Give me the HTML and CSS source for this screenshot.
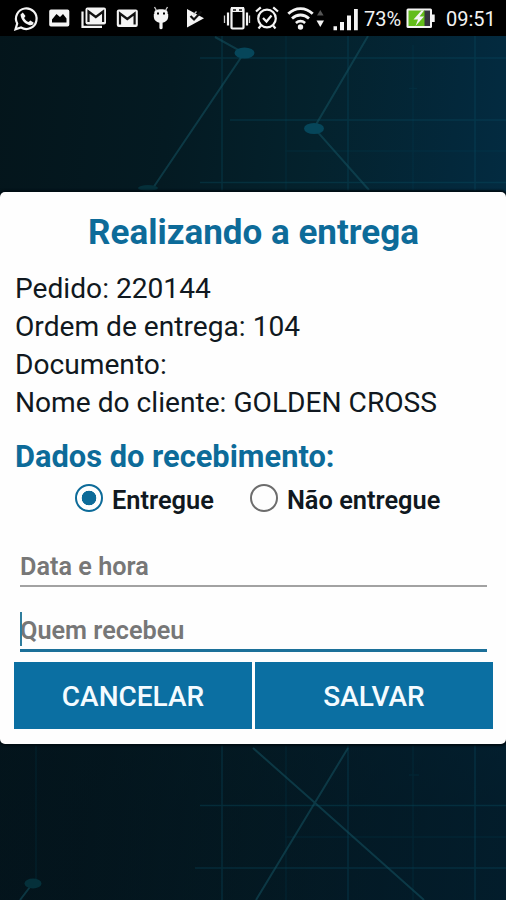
FILE: index.html
```html
<!DOCTYPE html>
<html lang="pt-BR">
<head>
<meta charset="utf-8">
<title>Realizando a entrega</title>
<link rel="stylesheet" href="styles.css">
</head>
<body>
<div class="screen">
  <svg class="backdrop" viewBox="0 0 506 900" aria-hidden="true">
    <g class="grid-lines">
      <path d="M222 36V900M348 36V900M475 36V900M200 58H506M230 120H506M200 182.500H506M200 805.500H506M195 868H506"/>
      <path class="faint" d="M286 36V900M413 45V900M36 745V880M285 151H506M285 837H506M409 88.500h8M409 775h10"/>
    </g>
    <g class="links">
      <path d="M215 37L244 53L153 188M368 36L314 128L369 190M348 748L256 900M253 748L314 802L424 900M33 883L20 900"/>
    </g>
    <g class="nodes">
      <ellipse cx="244.500" cy="53" rx="10" ry="5.500"/>
      <ellipse cx="314" cy="128.500" rx="10" ry="5.500"/>
      <ellipse class="dim" cx="33" cy="883.500" rx="8.500" ry="5"/>
      <ellipse class="dim" cx="148" cy="188" rx="10" ry="3"/>
    </g>
  </svg>

  <header class="status">
    <svg viewBox="12 0 35 36"><path class="line2" d="M15.500 29.300L17.200 23.500A10.300 10.300 0 1 1 21 27.500Z"/><path class="fill" d="M20.500 14.500l2.300-2 2.700 3.500-1.400 1.900c1 2 2.500 3.300 4.500 4.200l1.800-1.700 3.400 2.300c-.8 2.300-2.500 2.900-4.900 2.200-4.300-1.300-7.800-5-8.400-10.400z"/></svg>
    <svg viewBox="47 0 32 36"><path class="fill" fill-rule="evenodd" d="M51 9.500h16.500a1.800 1.800 0 0 1 1.800 1.800v13.400a1.800 1.800 0 0 1-1.800 1.800H51a1.800 1.800 0 0 1-1.800-1.800V11.300A1.800 1.800 0 0 1 51 9.500zM52 22.500h14.500v-4l-3.500-4.500-3 3-3.500-3-4.500 5.500z"/></svg>
    <svg viewBox="79 0 35 36"><path class="line2" d="M82.500 11.500V26.800H102"/><rect class="fill" x="85.500" y="7.500" width="20.500" height="17" rx="2"/><path class="cut" d="M88.500 22V11.500l7.300 5.500 7.300-5.500V22"/></svg>
    <svg viewBox="114 0 36 36"><rect class="fill" x="116.800" y="9.500" width="21" height="17.500" rx="2"/><path class="cut" d="M120 24.500V13.500l7.300 5.500 7.300-5.500v11"/></svg>
    <svg viewBox="150 0 34 36"><path class="fill" fill-rule="evenodd" d="M155 10.500c3.500-1.600 8.500-1.600 12 0 .7 1.200.9 2.400.7 3.500h.5v3c-.2 3.200-2.500 5-5.600 5.700v5.600c-.5 1.200-2.700 1.200-3.200 0v-5.600c-3.100-.7-5.400-2.500-5.600-5.700v-3h.5c-.2-1.100 0-2.300.7-3.500zM157 12.500v2h2v-2zM163 12.500v2h2v-2z"/><path class="line1" d="M154.500 7l2 3.500M167.500 7l-2 3.500"/></svg>
    <svg viewBox="184 0 37 36"><path class="fill" d="M187 9l17 9.200L187 27.500z"/><path class="cut" d="M190.500 16l3.500 3.500 7.500-8"/><path class="line1" d="M196.500 11.500l-3 3.200"/></svg>
    <svg viewBox="221 0 32 36"><rect class="line2" x="231.500" y="8" width="12" height="20.500" rx="1"/><path class="fill" d="M231 7h13v5h-13z"/><path class="cut thin" d="M233 10h3M239 10h3"/><path class="line2" d="M228 12.500v13M247 12.500v13"/><path class="line1" d="M224.500 15.500v7.500M249.500 15.500v7.500"/></svg>
    <svg viewBox="253 0 33 36"><circle class="line2" cx="267" cy="18.500" r="8.800"/><path class="line2" d="M256 11.500l4.800-4.200M273.200 7.300l4.800 4.200M261 25.500l-2.500 3M273 25.500l2.500 3M263 18l3.500 3.500 5-6"/></svg>
    <svg viewBox="286 0 29 36"><path class="wifi" d="M288.300 13.800c7-7 17.400-7 24.400 0M292 18.500c5-4.700 12-4.700 17 0M295.900 23c3-2.400 6.200-2.400 9.200 0"/><circle class="fill" cx="300.500" cy="27" r="2.700"/></svg>
    <svg viewBox="315 0 15 36"><path class="muted" d="M317 15.500l3.300-5.500 3.300 5.500z"/><path class="fill" d="M316.500 20.500h7.500l-3.700 6.500z"/></svg>
    <svg viewBox="330 0 34 36"><path class="fill" d="M333.500 26.200h3.500v4h-3.500zM340 22h4v8.200h-4zM347 15.500h4v14.700h-4zM354 9h3.800v21.200H354z"/></svg>
    <span class="percent">73%</span>
    <svg viewBox="405 0 40 36"><rect class="fill" x="406.500" y="8.500" width="25.500" height="19.500" rx="1.500"/><path class="fill" d="M432 14.500h2.700v7.500H432z"/><path class="empty" d="M424 10.500h6v15.500h-6z"/><path class="charge" d="M408.500 10.500h16v15.500h-16z"/><path class="fill" d="M421.500 10.500l-8 9h4.500l-2.500 6.500 8.500-9.500h-4.500l4.500-6z"/></svg>
    <span class="clock">09:51</span>
  </header>

  <main class="dialog">
    <h1 class="title"><span>Realizando a entrega</span></h1>
    <div class="details">
      <div><span>Pedido: 220144</span></div>
      <div><span>Ordem de entrega: 104</span></div>
      <div><span>Documento:</span></div>
      <div><span>Nome do cliente: GOLDEN CROSS</span></div>
    </div>
    <h2 class="section"><span>Dados do recebimento:</span></h2>
    <div class="options">
      <div class="option"><span class="radio checked"></span><span>Entregue</span></div>
      <div class="option"><span class="radio"></span><span>Não entregue</span></div>
    </div>
    <div class="field"><span>Data e hora</span></div>
    <div class="field focused"><i class="caret"></i><span>Quem recebeu</span></div>
    <div class="actions">
      <button><span>CANCELAR</span></button>
      <button><span>SALVAR</span></button>
    </div>
  </main>
</div>
</body>
</html>
```
FILE: styles.css
```css
* { box-sizing: border-box; }

body {
  margin: 0;
  font-family: Roboto, sans-serif;
  background: #03131a;
}

.screen {
  position: relative;
  height: 900px;
  overflow: hidden;
  display: flex;
  flex-direction: column;
  background:
    linear-gradient(180deg, rgba(3, 18, 26, 0) 20%, rgba(3, 18, 26, .62) 90%),
    linear-gradient(96deg, #04151b 0%, #041a22 30%, #04222d 55%, #03283b 78%, #032f48 100%);
}

.backdrop { position: absolute; inset: 0; width: 506px; height: 900px; fill: none; }
.grid-lines { stroke: #075064; stroke-opacity: .36; stroke-width: 1.500; }
.grid-lines .faint { stroke-opacity: .18; }
.links { stroke: #145260; stroke-opacity: .55; stroke-width: 2; }
.nodes { fill: #06465a; }
.nodes .dim { fill: #05303a; }

.status {
  position: relative;
  height: 36px;
  background: #000;
  color: #f2f2f2;
  display: grid;
  grid-template-columns: 35px 32px 35px 36px 34px 37px 32px 33px 29px 15px 34px 41px 40px 1fr;
  padding-left: 12px;
  font-size: 20px;
  line-height: 38px;
  white-space: nowrap;
}
.status svg { display: block; width: 100%; height: 36px; fill: none; }
.status .fill { fill: #f4f4f4; }
.status .muted { fill: #555; }
.status .charge { fill: #63bd1b; }
.status .empty { fill: #35343f; }
.line2 { stroke: #f4f4f4; stroke-width: 2.200; }
.line1 { stroke: #d0d0d0; stroke-width: 1.300; }
.wifi { stroke: #f4f4f4; stroke-width: 2.800; }
.cut { stroke: #111; stroke-width: 2.200; }
.cut.thin { stroke-width: 1.500; }
.clock { padding-left: 1px; }

.dialog {
  position: relative;
  margin-top: 156px;
  height: 552px;
  padding: 0 13px 0 14px;
  border-radius: 5px;
  background: #fefefe;
  box-shadow: 0 0 2px 2px #010d14;
  color: #101820;
}

.title {
  margin: 0;
  height: 78px;
  line-height: 82px;
  text-align: center;
  font-size: 35px;
  font-weight: 700;
  color: #0d6b99;
}

.details { font-size: 28.150px; line-height: 38px; padding-left: 1px; white-space: nowrap; }

.section {
  margin: 0;
  height: 54px;
  padding-left: 1px;
  line-height: 70px;
  font-size: 30.800px;
  font-weight: 700;
  color: #0d6b99;
}

.options { display: flex; gap: 36px; height: 44px; padding-left: 61px; align-items: center; margin-bottom: 7px; }
.option { display: flex; align-items: center; gap: 9px; font-size: 25.400px; font-weight: 600; line-height: 30px; white-space: nowrap; }
.option > span:last-child { padding-top: 4px; }
.radio {
  width: 28px;
  height: 28px;
  flex: none;
  border: 2.500px solid #6d6d6d;
  border-radius: 50%;
}
.radio.checked {
  border-color: #0d6b99;
  background: radial-gradient(circle, #0d6b99 7px, transparent 7.600px);
}

.field {
  position: relative;
  height: 60px;
  margin: 0 6px;
  border-bottom: 2px solid #a2a2a2;
  font-size: 25.250px;
  font-weight: 600;
  line-height: 40px;
  padding-top: 20px;
  color: #777;
}
.field.focused {
  height: 65px;
  padding-top: 24px;
  border-bottom: 3px solid #1c7099;
}
.caret { position: absolute; left: 0; top: 25px; width: 2px; height: 34px; background: #2f7d9d; }

.actions { display: grid; grid-template-columns: 1fr 1fr; gap: 3px; margin-top: 10px; }
.actions button {
  height: 67px;
  border: 0;
  padding: 2px 0 0;
  background: #0b6fa2;
  color: #f4fbff;
  font: 500 28px Roboto, sans-serif;
}
```
